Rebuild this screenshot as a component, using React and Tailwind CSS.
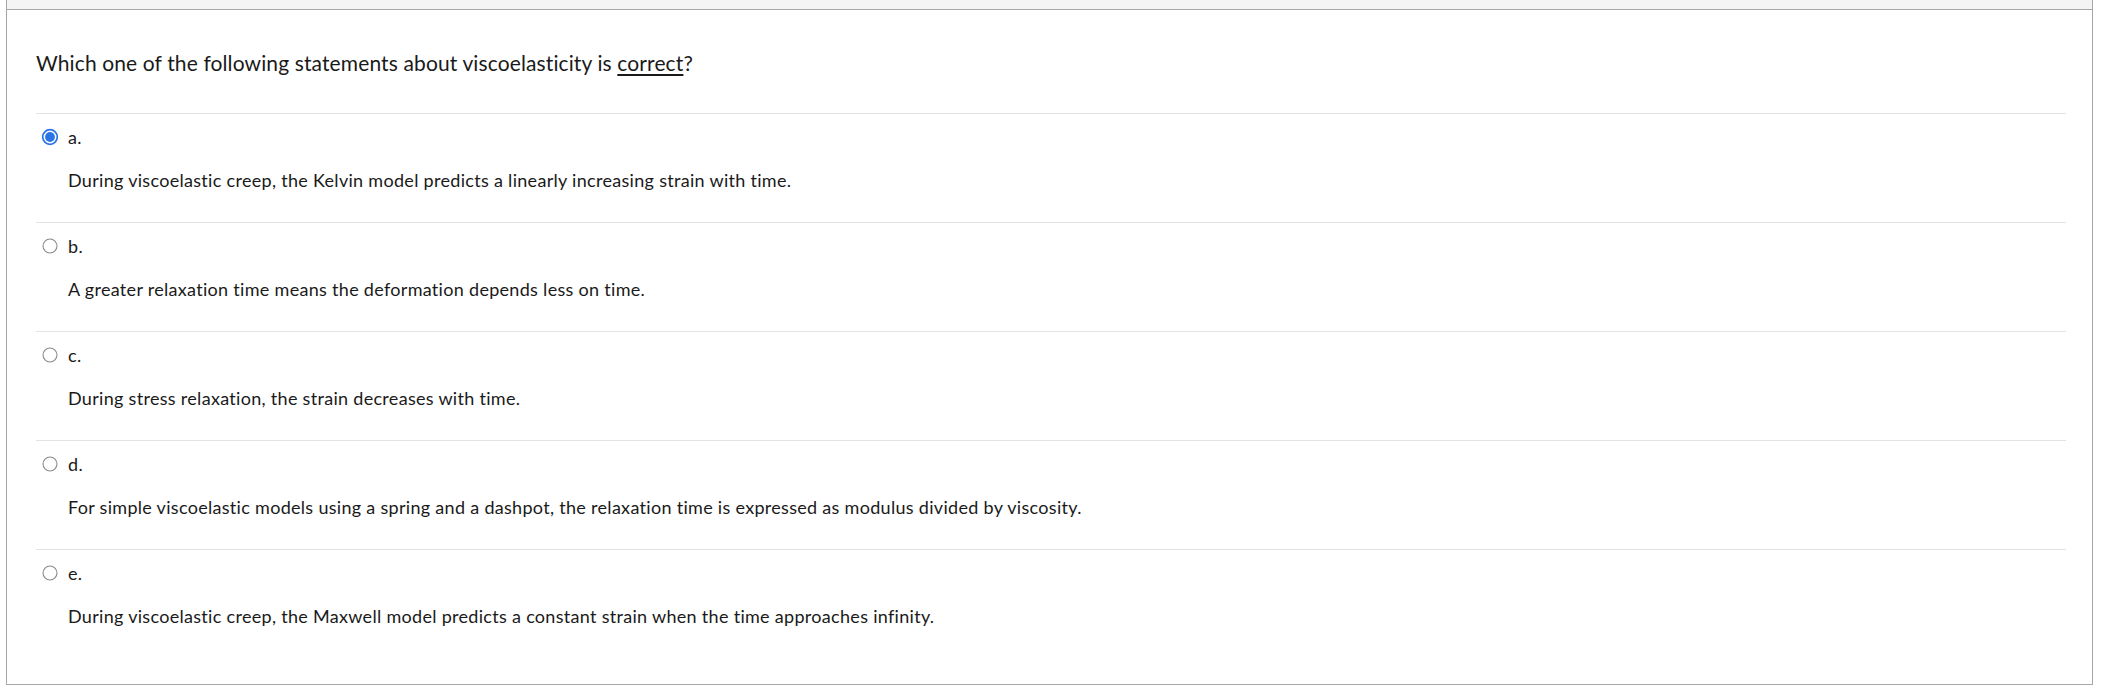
import React from "react";

const answers = [
  {
    letter: "a.",
    text: "During viscoelastic creep, the Kelvin model predicts a linearly increasing strain with time.",
    checked: true,
  },
  {
    letter: "b.",
    text: "A greater relaxation time means the deformation depends less on time.",
  },
  {
    letter: "c.",
    text: "During stress relaxation, the strain decreases with time.",
  },
  {
    letter: "d.",
    text: "For simple viscoelastic models using a spring and a dashpot, the relaxation time is expressed as modulus divided by viscosity.",
  },
  {
    letter: "e.",
    text: "During viscoelastic creep, the Maxwell model predicts a constant strain when the time approaches infinity.",
  },
];

const Radio = ({ checked }) =>
  checked ? (
    <svg width="18" height="18" viewBox="0 0 18 18">
      <circle cx="9" cy="9" r="7.3" fill="#fff" stroke="#2a74e6" strokeWidth="1.7" />
      <circle cx="9" cy="9" r="4.9" fill="#2a74e6" />
    </svg>
  ) : (
    <svg width="18" height="18" viewBox="0 0 18 18">
      <circle cx="9" cy="9" r="7" fill="#fff" stroke="#8a8a8a" strokeWidth="1.1" />
    </svg>
  );

export default function App() {
  return (
    <div className="w-[2104px] h-[696px] bg-white pl-[6px] pr-[11px] font-['Lato',sans-serif] text-[#1a1a1a]">
      <div className="h-[685px] border-x border-b border-[#a6a6a6]">
        {/* clipped header strip */}
        <div className="h-[10px] bg-[#f4f4f4] border-b border-[#a6a6a6]" />

        <div className="pl-[29px] pr-[26px]">
          {/* Question */}
          <div className="pt-[41px] pb-[38px] text-[21px] leading-[24px] tracking-[0.12px]">
            Which one of the following statements about viscoelasticity is{" "}
            <span className="underline decoration-[1.5px] underline-offset-[3px]">correct</span>?
          </div>

          {/* Answers */}
          {answers.map((a) => (
            <div key={a.letter} className="border-t border-[#e2e2e2] pt-[13px] pb-[31px] text-[18px] tracking-[0.3px]">
              <div className="flex items-center h-[20px]">
                <div className="w-[32px] flex items-center pl-[5px]">
                  <Radio checked={a.checked} />
                </div>
                <span className="leading-[20px]">{a.letter}</span>
              </div>
              <div className="pl-[32px] pt-[22px] leading-[22px]">{a.text}</div>
            </div>
          ))}
        </div>
      </div>
    </div>
  );
}
